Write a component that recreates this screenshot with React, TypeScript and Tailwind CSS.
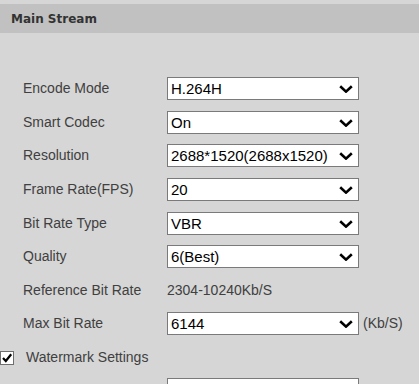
const Chevron = () => (
    <svg width="14" height="8" viewBox="0 0 14 8" className="absolute right-[5px] top-[7px]">
        <path d="M1.2 1.2 L7 6.6 L12.8 1.2" fill="none" stroke="#000" strokeWidth="2.6" />
    </svg>
)

const Select = ({ value }: { value: string }) => (
    <div className="relative w-[192px] h-[23px] bg-white border border-[#7a7a7a] pl-[3px] text-[15px] leading-[22px] text-black whitespace-nowrap overflow-hidden">
        {value}
        <Chevron />
    </div>
)

const Row = ({ label, h, children }: { label: string; h: string; children: React.ReactNode }) => (
    <div className={`flex items-start pl-[23px] ${h}`}>
        <div className="w-[144px] h-[23px] flex items-center text-[14px] text-[#404040]">{label}</div>
        {children}
    </div>
)

const App = () => {
    return (
        <div className="w-[419px] h-[384px] overflow-hidden bg-[#d6d6d6] font-['Liberation_Sans',Arial,sans-serif]">
            <div className="h-[4px]"></div>
            <div className="h-[29px] bg-[#c1c1c1] flex items-center pl-[11px]">
                <span className="font-['DejaVu_Sans',Verdana,sans-serif] font-bold text-[12px] text-[#333]">Main Stream</span>
            </div>
            <div className="h-[44px]"></div>
            <Row label="Encode Mode" h="h-[34px]"><Select value="H.264H" /></Row>
            <Row label="Smart Codec" h="h-[33px]"><Select value="On" /></Row>
            <Row label="Resolution" h="h-[34px]"><Select value="2688*1520(2688x1520)" /></Row>
            <Row label="Frame Rate(FPS)" h="h-[34px]"><Select value="20" /></Row>
            <Row label="Bit Rate Type" h="h-[33px]"><Select value="VBR" /></Row>
            <Row label="Quality" h="h-[34px]"><Select value="6(Best)" /></Row>
            <Row label="Reference Bit Rate" h="h-[33px]">
                <div className="h-[23px] flex items-center text-[14px] text-[#404040]">2304-10240Kb/S</div>
            </Row>
            <Row label="Max Bit Rate" h="h-[34px]">
                <Select value="6144" />
                <div className="h-[23px] flex items-center ml-[4px] text-[14px] text-[#404040]">(Kb/S)</div>
            </Row>
            <div className="flex items-center h-[23px]">
                <div className="relative w-[14px] h-[14px] bg-white border border-[#6e6e6e]">
                    <svg width="12" height="12" viewBox="0 0 12 12" className="absolute left-[0px] top-[0px]">
                        <path d="M2 6 L4.8 9 L10.2 2.2" fill="none" stroke="#000" strokeWidth="2.2" />
                    </svg>
                </div>
                <span className="ml-[12px] text-[14px] text-[#404040]">Watermark Settings</span>
            </div>
            <div className="h-[9px]"></div>
            <div className="pl-[167px]">
                <div className="w-[192px] h-[23px] bg-white border border-[#7a7a7a]"></div>
            </div>
        </div>
    )
}

export default App
